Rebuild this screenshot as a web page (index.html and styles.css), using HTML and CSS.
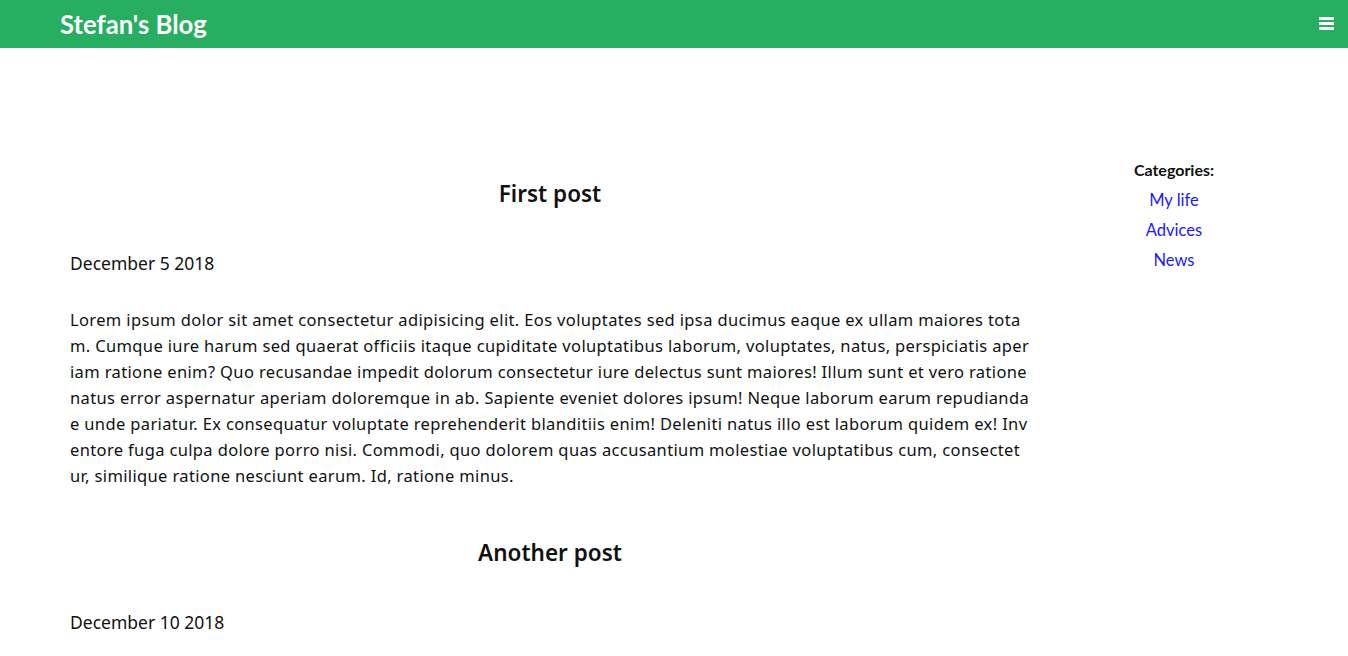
FILE: index.html
```html
<!DOCTYPE html>
<html>
<head>
<meta charset="utf-8">
<link rel="stylesheet" href="styles.css">
</head>
<body>
<header class="topbar">
  <a class="brand" href="#">Stefan's Blog</a>
  <button class="menu" aria-label="menu">
    <svg width="15" height="13" viewBox="0 0 15 13"><rect x="0" y="0" width="15" height="3" fill="#fff"/><rect x="0" y="5" width="15" height="3" fill="#fff"/><rect x="0" y="10" width="15" height="3" fill="#fff"/></svg>
  </button>
</header>
<div class="layout">
  <main class="posts">
    <article class="post">
      <h2 class="post-title">First post</h2>
      <p class="post-date">December 5 2018</p>
      <p class="post-body">Lorem ipsum dolor sit amet consectetur adipisicing elit. Eos voluptates sed ipsa ducimus eaque ex ullam maiores totam. Cumque iure harum sed quaerat officiis itaque cupiditate voluptatibus laborum, voluptates, natus, perspiciatis aperiam ratione enim? Quo recusandae impedit dolorum consectetur iure delectus sunt maiores! Illum sunt et vero ratione natus error aspernatur aperiam doloremque in ab. Sapiente eveniet dolores ipsum! Neque laborum earum repudiandae unde pariatur. Ex consequatur voluptate reprehenderit blanditiis enim! Deleniti natus illo est laborum quidem ex! Inventore fuga culpa dolore porro nisi. Commodi, quo dolorem quas accusantium molestiae voluptatibus cum, consectetur, similique ratione nesciunt earum. Id, ratione minus.</p>
    </article>
    <article class="post">
      <h2 class="post-title">Another post</h2>
      <p class="post-date">December 10 2018</p>
    </article>
  </main>
  <aside class="sidebar">
    <h3 class="side-title">Categories:</h3>
    <ul class="cat-list">
      <li><a href="#">My life</a></li>
      <li><a href="#">Advices</a></li>
      <li><a href="#">News</a></li>
    </ul>
  </aside>
</div>
</body>
</html>
```
FILE: styles.css
```css
html, body {
  margin: 0;
  padding: 0;
  background: #fff;
  color: #111;
  font-family: Lato, "Noto Sans", sans-serif;
}
.topbar {
  height: 48px;
  background: #27ae60;
  display: flex;
  align-items: center;
  justify-content: space-between;
  padding: 0 14px 0 60px;
}
.brand {
  color: #fff;
  text-decoration: none;
  font-weight: 700;
  font-size: 25.7px;
}
.menu {
  background: none;
  border: 0;
  padding: 0;
  display: flex;
  margin-top: -1px;
}
.layout {
  display: grid;
  grid-template-columns: 960px 200px;
  column-gap: 44px;
  padding: 0 70px;
}
.posts {
  padding-top: 130px;
}
.post-title {
  margin: 0;
  text-align: center;
  font-family: "Noto Sans", sans-serif;
  font-size: 22.5px;
  font-weight: 600;
  line-height: 32px;
  height: 32px;
}
.post-date {
  margin: 41px 0 0;
  font-family: "Noto Sans", sans-serif;
  font-size: 17.5px;
  line-height: 24px;
}
.post-body {
  margin: 32px 0 0;
  font-family: "Noto Sans", sans-serif;
  font-size: 16.5px;
  letter-spacing: 0.36px;
  line-height: 26px;
  word-break: break-all;
}
.post + .post {
  margin-top: 48px;
}
.sidebar {
  padding-top: 112px;
  text-align: center;
}
.side-title {
  margin: 0;
  font-size: 16px;
  font-weight: 700;
  line-height: 20px;
}
.cat-list {
  list-style: none;
  margin: 0;
  padding: 0;
}
.cat-list li {
  margin-top: 10px;
  line-height: 20px;
  font-size: 16.5px;
}
.cat-list a {
  color: #1a1aff;
  text-decoration: none;
}
```
